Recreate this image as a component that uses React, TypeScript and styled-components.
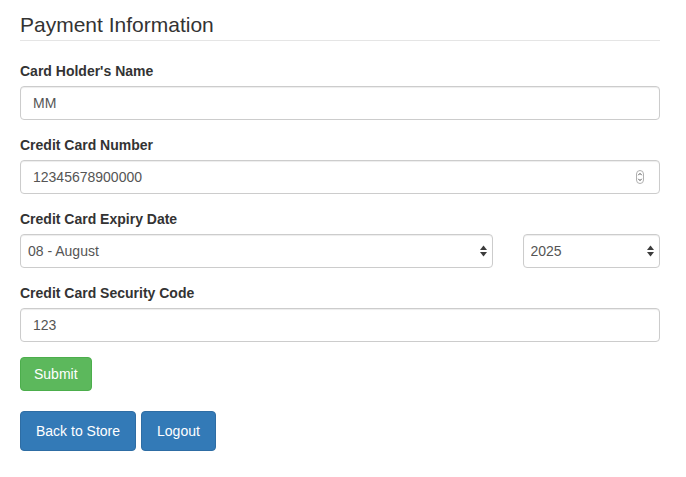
import React from "react";
import styled, { createGlobalStyle } from "styled-components";

const GlobalStyle = createGlobalStyle`
  html, body {
    margin: 0;
    padding: 0;
    background: #ffffff;
  }
  body {
    font-family: "Liberation Sans", Arial, Helvetica, sans-serif;
    font-size: 14px;
    line-height: 1.42857143;
    color: #333333;
  }
  * { box-sizing: border-box; }
`;

const Page = styled.div`
  width: 640px;
  padding: 10px 0 0 20px;
  box-sizing: content-box;
`;

const Fieldset = styled.form`
  margin: 0;
  padding: 0;
`;

const Legend = styled.div`
  font-size: 21px;
  line-height: 30px;
  color: #333333;
  border-bottom: 1px solid #e5e5e5;
  margin-bottom: 20px;
`;

const FormGroup = styled.div`
  margin-bottom: 15px;
`;

const Label = styled.label`
  display: block;
  font-weight: bold;
  line-height: 20px;
  margin-bottom: 5px;
`;

const Control = styled.input`
  display: block;
  width: 100%;
  height: 34px;
  padding: 6px 12px;
  font-family: inherit;
  font-size: 14px;
  line-height: 20px;
  color: #555555;
  background: #ffffff;
  border: 1px solid #cccccc;
  border-radius: 4px;
  box-shadow: inset 0 1px 1px rgba(0, 0, 0, 0.075);
  outline: none;
`;

const FieldWrap = styled.div`
  position: relative;
`;

const Spinner = styled.svg`
  position: absolute;
  right: 16px;
  top: 10px;
  width: 8px;
  height: 14px;
  pointer-events: none;
`;

const DateRow = styled.div`
  display: grid;
  grid-template-columns: 472.5fr 137.5fr;
  column-gap: 30px;
`;

const Select = styled.select`
  display: block;
  width: 100%;
  height: 34px;
  padding: 6px 20px 6px 7px;
  font-family: inherit;
  font-size: 14px;
  line-height: 20px;
  color: #555555;
  background: #ffffff;
  border: 1px solid #cccccc;
  border-radius: 4px;
  box-shadow: inset 0 1px 1px rgba(0, 0, 0, 0.075);
  appearance: none;
  -webkit-appearance: none;
  outline: none;
`;

const SelectArrows = styled.svg`
  position: absolute;
  right: 6px;
  top: 11px;
  width: 7px;
  height: 12px;
  pointer-events: none;
`;

const Button = styled.button<{ $variant: "success" | "primary"; $large?: boolean }>`
  display: inline-block;
  font-family: inherit;
  font-size: 14px;
  line-height: 20px;
  color: #ffffff;
  white-space: nowrap;
  cursor: pointer;
  border-radius: 4px;
  padding: ${(p) => (p.$large ? "9px 15px" : "6px 13px")};
  background: ${(p) => (p.$variant === "success" ? "#5cb85c" : "#337ab7")};
  border: 1px solid ${(p) => (p.$variant === "success" ? "#4cae4c" : "#2e6da4")};
`;

const NavRow = styled.div`
  display: flex;
  gap: 5px;
  margin-top: 20px;
`;

const SelectField: React.FC<{ value: string; options: string[] }> = ({ value, options }) => (
  <FieldWrap>
    <Select defaultValue={value}>
      {options.map((o) => (
        <option key={o} value={o}>
          {o}
        </option>
      ))}
    </Select>
    <SelectArrows viewBox="0 0 7 12">
      <path d="M0 5 L3.5 0.5 L7 5 Z" fill="#3c3c3c" />
      <path d="M0 7 L7 7 L3.5 11.5 Z" fill="#3c3c3c" />
    </SelectArrows>
  </FieldWrap>
);

const months = [
  "01 - January",
  "02 - February",
  "03 - March",
  "04 - April",
  "05 - May",
  "06 - June",
  "07 - July",
  "08 - August",
  "09 - September",
  "10 - October",
  "11 - November",
  "12 - December",
];

const years = ["2024", "2025", "2026", "2027", "2028", "2029", "2030"];

export default function App() {
  return (
    <>
      <GlobalStyle />
      <Page>
        <Fieldset onSubmit={(e) => e.preventDefault()}>
          <Legend>Payment Information</Legend>
          <FormGroup>
            <Label>Card Holder's Name</Label>
            <Control type="text" defaultValue="MM" />
          </FormGroup>
          <FormGroup>
            <Label>Credit Card Number</Label>
            <FieldWrap>
              <Control type="text" defaultValue="12345678900000" />
              <Spinner viewBox="0 0 8 14">
                <rect x="0.5" y="0.5" width="7" height="13" rx="3.5" fill="#ffffff" stroke="#b0b0b0" />
                <path d="M2.3 5.2 L4 3.4 L5.7 5.2" fill="none" stroke="#555555" strokeWidth="1" />
                <path d="M2.3 8.8 L4 10.6 L5.7 8.8" fill="none" stroke="#555555" strokeWidth="1" />
              </Spinner>
            </FieldWrap>
          </FormGroup>
          <FormGroup>
            <Label>Credit Card Expiry Date</Label>
            <DateRow>
              <SelectField value="08 - August" options={months} />
              <SelectField value="2025" options={years} />
            </DateRow>
          </FormGroup>
          <FormGroup>
            <Label>Credit Card Security Code</Label>
            <Control type="text" defaultValue="123" />
          </FormGroup>
          <Button type="submit" $variant="success">
            Submit
          </Button>
        </Fieldset>
        <NavRow>
          <Button type="button" $variant="primary" $large>
            Back to Store
          </Button>
          <Button type="button" $variant="primary" $large>
            Logout
          </Button>
        </NavRow>
      </Page>
    </>
  );
}
